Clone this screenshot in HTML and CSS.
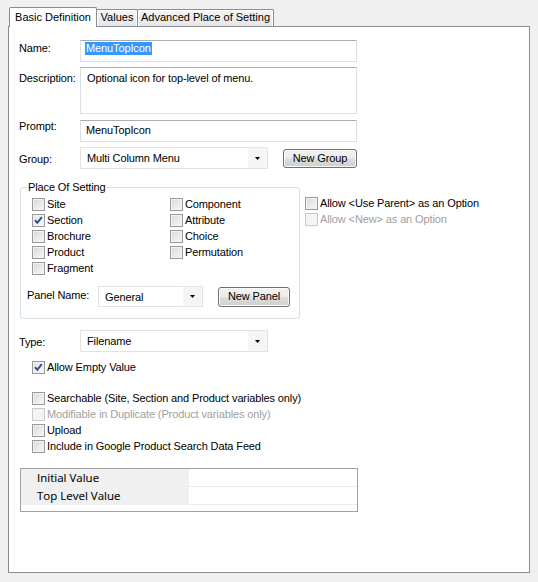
FILE: index.html
```html
<!DOCTYPE html>
<html>
<head>
<meta charset="utf-8">
<title>Basic Definition</title>
<link rel="stylesheet" href="styles.css">
</head>
<body>
<div class="window">
  <div class="tabs">
    <div class="tab active">Basic Definition</div>
    <div class="tab t-values">Values</div>
    <div class="tab t-adv">Advanced Place of Setting</div>
  </div>
  <div class="panel">
    <div class="row r-name">
      <div class="lbl">Name:</div>
      <div class="textbox"><span class="selected">MenuTopIcon</span></div>
    </div>
    <div class="row r-desc">
      <div class="lbl">Description:</div>
      <div class="textbox area">Optional icon for top-level of menu.</div>
    </div>
    <div class="row r-prompt">
      <div class="lbl">Prompt:</div>
      <div class="textbox">MenuTopIcon</div>
    </div>
    <div class="row r-group">
      <div class="lbl">Group:</div>
      <div class="combo combo-wide"><span class="val">Multi Column Menu</span><span class="arrow"><svg width="5" height="3" viewBox="0 0 5 3"><polygon points="0,0 5,0 2.5,3" fill="#000"/></svg></span></div>
      <div class="btn btn-group">New Group</div>
    </div>

    <div class="place">
      <div class="groupbox">
        <div class="legend">Place Of Setting</div>
        <div class="cbgrid">
          <div class="chk"><span class="box"></span>Site</div>
          <div class="chk"><span class="box on"><svg width="11" height="11" viewBox="0 0 11 11"><path d="M2 5.2 L4.3 7.8 L8.8 2.2" fill="none" stroke="#2b4c8c" stroke-width="1.9"/></svg></span>Section</div>
          <div class="chk"><span class="box"></span>Brochure</div>
          <div class="chk"><span class="box"></span>Product</div>
          <div class="chk"><span class="box"></span>Fragment</div>
          <div class="chk"><span class="box"></span>Component</div>
          <div class="chk"><span class="box"></span>Attribute</div>
          <div class="chk"><span class="box"></span>Choice</div>
          <div class="chk"><span class="box"></span>Permutation</div>
        </div>
        <div class="panelname">
          <div class="lbl2">Panel Name:</div>
          <div class="combo combo-small"><span class="val">General</span><span class="arrow"><svg width="5" height="3" viewBox="0 0 5 3"><polygon points="0,0 5,0 2.5,3" fill="#000"/></svg></span></div>
          <div class="btn btn-panel">New Panel</div>
        </div>
      </div>
      <div class="sidechecks">
        <div class="chk"><span class="box"></span>Allow &lt;Use Parent&gt; as an Option</div>
        <div class="chk disabled"><span class="box"></span>Allow &lt;New&gt; as an Option</div>
      </div>
    </div>

    <div class="row r-type">
      <div class="lbl">Type:</div>
      <div class="combo combo-wide"><span class="val">Filename</span><span class="arrow"><svg width="5" height="3" viewBox="0 0 5 3"><polygon points="0,0 5,0 2.5,3" fill="#000"/></svg></span></div>
    </div>

    <div class="checks c-empty">
      <div class="chk"><span class="box on"><svg width="11" height="11" viewBox="0 0 11 11"><path d="M2 5.2 L4.3 7.8 L8.8 2.2" fill="none" stroke="#2b4c8c" stroke-width="1.9"/></svg></span>Allow Empty Value</div>
    </div>

    <div class="checks c-opts">
      <div class="chk"><span class="box"></span>Searchable (Site, Section and Product variables only)</div>
      <div class="chk disabled"><span class="box"></span>Modifiable in Duplicate (Product variables only)</div>
      <div class="chk"><span class="box"></span>Upload</div>
      <div class="chk"><span class="box"></span>Include in Google Product Search Data Feed</div>
    </div>

    <div class="props">
      <div class="prow"><div class="pname">Initial Value</div><div class="pval"></div></div>
      <div class="prow"><div class="pname">Top Level Value</div><div class="pval"></div></div>
      <div class="pfoot"></div>
    </div>
  </div>
</div>
</body>
</html>
```

FILE: styles.css
```css
* { box-sizing: border-box; }

html, body {
  margin: 0;
  padding: 0;
}

body {
  width: 538px;
  height: 582px;
  overflow: hidden;
  background: #f0f0f0;
  font-family: "Liberation Sans", Arial, sans-serif;
  font-size: 11px;
  line-height: 13px;
  color: #000;
}

.window {
  padding: 7px 0 0 8px;
}

/* ---------- tabs ---------- */
.tabs {
  display: flex;
  align-items: flex-end;
  height: 19px;
  padding-left: 1px;
  position: relative;
  z-index: 2;
}

.tab {
  height: 17px;
  border: 1px solid #898c95;
  border-bottom: none;
  border-radius: 2px 2px 0 0;
  background: linear-gradient(#f4f4f4, #e6e6e6);
  box-shadow: inset 1px 1px 0 #fff, inset -1px 0 0 #fff;
  padding-top: 1px;
  text-align: center;
  white-space: nowrap;
}

.tab.active {
  height: 20px;
  width: 88px;
  margin-bottom: -1px;
  padding-top: 3px;
  background: #fff;
  box-shadow: none;
}

.t-values {
  width: 42px;
  margin-left: -1px;
}

.t-adv {
  width: 137px;
  margin-left: -1px;
}

/* ---------- panel ---------- */
.panel {
  width: 522px;
  height: 547px;
  background: #fff;
  border: 1px solid #898c95;
  padding: 13px 0 0 10px;
  position: relative;
  z-index: 1;
  letter-spacing: -0.12px;
}

.row {
  display: flex;
  align-items: flex-start;
}

.lbl {
  width: 61px;
  flex: none;
  white-space: nowrap;
}

.textbox {
  width: 277px;
  height: 22px;
  border: 1px solid #dbdfe6;
  border-top-color: #abadb3;
  padding: 1px 0 0 5px;
  white-space: nowrap;
}

.textbox.area {
  height: 47px;
  padding: 4px 0 0 6px;
}

.selected {
  background: #3399ff;
  color: #fff;
  padding: 0 1px;
  margin-left: -1px;
  display: inline-block;
  line-height: 13px;
}

.r-name .lbl { padding-top: 2px; }

.r-desc { margin-top: 5px; }
.r-desc .lbl { padding-top: 5px; }

.r-prompt { margin-top: 6px; }
.r-prompt .textbox { padding-top: 3px; }
.r-prompt .lbl { padding-top: 0; }

.r-group { margin-top: 5px; }
.r-group .lbl { padding-top: 6px; }

/* ---------- combo ---------- */
.combo {
  height: 22px;
  border: 1px solid #e3e3e3;
  background: #fff;
  display: flex;
  align-items: center;
  padding-left: 6px;
}

.combo .val {
  flex: 1;
  white-space: nowrap;
  padding-top: 1px;
}

.combo .arrow {
  width: 19px;
  align-self: stretch;
  display: flex;
  align-items: center;
  justify-content: center;
  background: #f5f5f5;
}

.combo .arrow svg { display: block; }

.combo-wide { width: 188px; }

.combo-small {
  width: 105px;
  height: 21px;
}

/* ---------- buttons ---------- */
.btn {
  height: 19px;
  border: 1px solid #707070;
  border-radius: 3px;
  background: linear-gradient(#f2f2f2 0%, #ebebeb 48%, #dddddd 52%, #cfcfcf 100%);
  box-shadow: inset 0 0 0 1px #fafafa;
  text-align: center;
  padding-top: 2px;
  white-space: nowrap;
}

.btn-group {
  width: 74px;
  margin-left: 15px;
  margin-top: 2px;
}

.btn-panel {
  width: 72px;
  height: 20px;
  margin-left: 15px;
}

/* ---------- checkboxes ---------- */
.chk {
  height: 16px;
  display: flex;
  align-items: center;
  white-space: nowrap;
}

.box {
  width: 13px;
  height: 13px;
  flex: none;
  margin-right: 2px;
  border: 1px solid #999a9a;
  background: linear-gradient(135deg, #d8d8d8, #f8f8f8);
  box-shadow: inset 0 0 0 1px #f2f2f2;
  display: flex;
  align-items: center;
  justify-content: center;
}

.box.on {
  background: linear-gradient(135deg, #e4e4e4, #fafafa);
}

.box svg { display: block; }

.chk.disabled { color: #a0a0a0; }

.chk.disabled .box {
  border-color: #cacaca;
  background: #f4f4f4;
  box-shadow: none;
}

/* ---------- place of setting ---------- */
.place {
  display: flex;
  align-items: flex-start;
  margin-top: 18px;
}

.groupbox {
  width: 280px;
  height: 132px;
  margin-left: 1px;
  border: 1px solid #d5dfe5;
  border-radius: 3px;
  padding: 8px 0 0 11px;
  position: relative;
}

.legend {
  position: absolute;
  top: -7px;
  left: 6px;
  background: #fff;
  padding: 0 1px 0 1px;
}

.cbgrid {
  display: grid;
  grid-template-columns: 138px 1fr;
  grid-template-rows: repeat(5, 16px);
  grid-auto-flow: column;
}

.panelname {
  display: flex;
  align-items: center;
  margin-top: 10px;
  margin-left: -5px;
}

.lbl2 {
  width: 71px;
  flex: none;
  white-space: nowrap;
  margin-top: -3px;
}

.sidechecks {
  margin-left: 5px;
  margin-top: 8px;
}

/* ---------- type ---------- */
.r-type { margin-top: 11px; }
.r-type .lbl { padding-top: 6px; }

.checks { padding-left: 13px; }
.c-empty { margin-top: 7px; }
.c-opts { margin-top: 15px; }

/* ---------- property table ---------- */
.props {
  width: 338px;
  margin-top: 14px;
  margin-left: 1px;
  border: 1px solid #a0a0a0;
  font-family: "Open Sans", "Liberation Sans", sans-serif;
  font-size: 11.5px;
  letter-spacing: 0;
}

.prow {
  display: flex;
  height: 18px;
}

.pname {
  width: 168px;
  background: #f0f0f0;
  padding-left: 16px;
  line-height: 18px;
  color: #000;
  -webkit-text-stroke: 0.1px #000;
}

.pval {
  flex: 1;
  border-bottom: 1px solid #e9e9e9;
}

.pfoot {
  height: 6px;
}
```
